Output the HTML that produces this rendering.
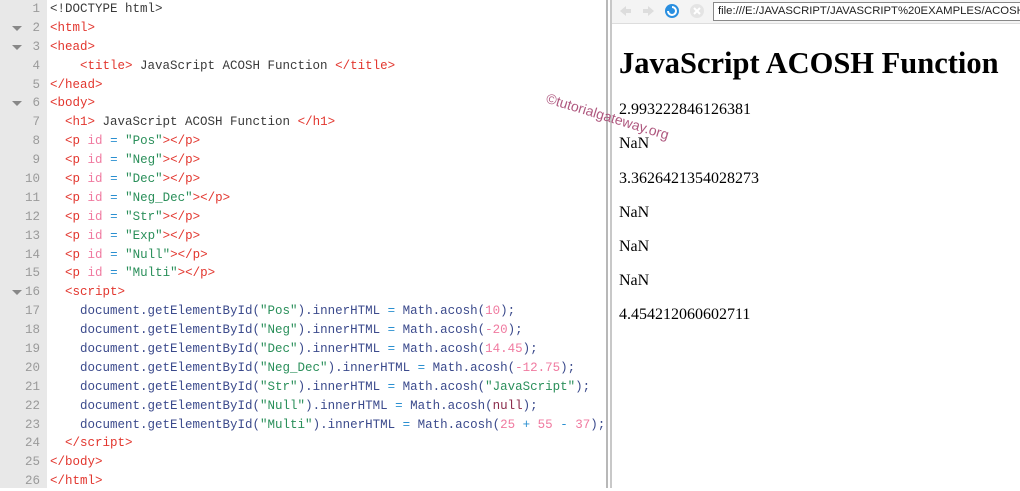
<!DOCTYPE html>
<html><head><style>
body{margin:0;width:1020px;height:488px;overflow:hidden;background:#fff;position:relative;font-family:"Liberation Sans",sans-serif}
#gut{position:absolute;left:0;top:0;width:47px;height:488px;background:#e8e8e8}
#code{position:absolute;left:0;top:0;width:606px;font-family:"Liberation Mono",monospace;font-size:12.5px;line-height:18.9px;color:#3b4a8c}
.l{position:relative;height:18.9px}
.n{position:absolute;left:0;width:40px;text-align:right;color:#9a9a9a}
.n.f::before{content:"";position:absolute;left:12px;top:7px;border-left:5px solid transparent;border-right:5px solid transparent;border-top:5px solid #888}
.c{position:absolute;left:50px;white-space:pre}
.t{color:#e2362e}.a{color:#f07aa0}.s{color:#2a8f5a}.m{color:#f07aa0}.o{color:#2a8fd0}.k{color:#3a3a3a}
#div{position:absolute;left:606px;top:0;width:6px;height:488px;background:#fff;border-left:2px solid #b8b8b8;border-right:2px solid #c8c8c8;box-sizing:border-box}
#bar{position:absolute;left:612px;top:0;width:408px;height:23px;background:#f4f4f4;border-bottom:1px solid #ddd}
#url{position:absolute;left:713px;top:2px;width:310px;height:19px;border:1px solid #888;background:#fff;font-size:11.3px;line-height:17px;padding-left:4px;box-sizing:border-box;color:#222;white-space:nowrap;overflow:hidden}
#pg{position:absolute;left:619px;top:2px;font-family:"Liberation Serif",serif;color:#000}
h1{position:absolute;top:43px;left:0;margin:0;font-size:30.5px;white-space:nowrap;line-height:36px}
.p{position:absolute;left:0;font-size:16px;white-space:nowrap;line-height:18px}
#wm{position:absolute;left:549px;top:90px;transform:rotate(17deg);transform-origin:0 0;color:#a13a68;font-size:14px;white-space:nowrap;opacity:.85}
</style></head><body>
<div id="gut"></div>
<div id="code"><div class="l"><span class="n">1</span><span class="c k">&lt;!DOCTYPE html&gt;</span></div><div class="l"><span class="n f">2</span><span class="c t">&lt;html&gt;</span></div><div class="l"><span class="n f">3</span><span class="c t">&lt;head&gt;</span></div><div class="l"><span class="n">4</span><span class="c">    <span class="t">&lt;title&gt;</span><span class="k"> JavaScript ACOSH Function </span><span class="t">&lt;/title&gt;</span></span></div><div class="l"><span class="n">5</span><span class="c t">&lt;/head&gt;</span></div><div class="l"><span class="n f">6</span><span class="c t">&lt;body&gt;</span></div><div class="l"><span class="n">7</span><span class="c">  <span class="t">&lt;h1&gt;</span><span class="k"> JavaScript ACOSH Function </span><span class="t">&lt;/h1&gt;</span></span></div><div class="l"><span class="n">8</span><span class="c">  <span class="t">&lt;p</span> <span class="a">id</span> <span class="o">=</span> <span class="s">"Pos"</span><span class="t">&gt;&lt;/p&gt;</span></span></div><div class="l"><span class="n">9</span><span class="c">  <span class="t">&lt;p</span> <span class="a">id</span> <span class="o">=</span> <span class="s">"Neg"</span><span class="t">&gt;&lt;/p&gt;</span></span></div><div class="l"><span class="n">10</span><span class="c">  <span class="t">&lt;p</span> <span class="a">id</span> <span class="o">=</span> <span class="s">"Dec"</span><span class="t">&gt;&lt;/p&gt;</span></span></div><div class="l"><span class="n">11</span><span class="c">  <span class="t">&lt;p</span> <span class="a">id</span> <span class="o">=</span> <span class="s">"Neg_Dec"</span><span class="t">&gt;&lt;/p&gt;</span></span></div><div class="l"><span class="n">12</span><span class="c">  <span class="t">&lt;p</span> <span class="a">id</span> <span class="o">=</span> <span class="s">"Str"</span><span class="t">&gt;&lt;/p&gt;</span></span></div><div class="l"><span class="n">13</span><span class="c">  <span class="t">&lt;p</span> <span class="a">id</span> <span class="o">=</span> <span class="s">"Exp"</span><span class="t">&gt;&lt;/p&gt;</span></span></div><div class="l"><span class="n">14</span><span class="c">  <span class="t">&lt;p</span> <span class="a">id</span> <span class="o">=</span> <span class="s">"Null"</span><span class="t">&gt;&lt;/p&gt;</span></span></div><div class="l"><span class="n">15</span><span class="c">  <span class="t">&lt;p</span> <span class="a">id</span> <span class="o">=</span> <span class="s">"Multi"</span><span class="t">&gt;&lt;/p&gt;</span></span></div><div class="l"><span class="n f">16</span><span class="c">  <span class="t">&lt;script&gt;</span></span></div><div class="l"><span class="n">17</span><span class="c">    document.getElementById(<span class="s">"Pos"</span>).innerHTML <span class="o">=</span> Math.acosh(<span class="m">10</span>);</span></div><div class="l"><span class="n">18</span><span class="c">    document.getElementById(<span class="s">"Neg"</span>).innerHTML <span class="o">=</span> Math.acosh(<span class="m">-20</span>);</span></div><div class="l"><span class="n">19</span><span class="c">    document.getElementById(<span class="s">"Dec"</span>).innerHTML <span class="o">=</span> Math.acosh(<span class="m">14.45</span>);</span></div><div class="l"><span class="n">20</span><span class="c">    document.getElementById(<span class="s">"Neg_Dec"</span>).innerHTML <span class="o">=</span> Math.acosh(<span class="m">-12.75</span>);</span></div><div class="l"><span class="n">21</span><span class="c">    document.getElementById(<span class="s">"Str"</span>).innerHTML <span class="o">=</span> Math.acosh(<span class="s">"JavaScript"</span>);</span></div><div class="l"><span class="n">22</span><span class="c">    document.getElementById(<span class="s">"Null"</span>).innerHTML <span class="o">=</span> Math.acosh(<span style="color:#8a2a4a">null</span>);</span></div><div class="l"><span class="n">23</span><span class="c">    document.getElementById(<span class="s">"Multi"</span>).innerHTML <span class="o">=</span> Math.acosh(<span class="m">25</span> <span class="o">+</span> <span class="m">55</span> <span class="o">-</span> <span class="m">37</span>);</span></div><div class="l"><span class="n">24</span><span class="c">  <span class="t">&lt;/script&gt;</span></span></div><div class="l"><span class="n">25</span><span class="c t">&lt;/body&gt;</span></div><div class="l"><span class="n">26</span><span class="c t">&lt;/html&gt;</span></div></div>
<div id="div"></div>
<div id="bar">
<svg width="100" height="23" style="position:absolute;left:0;top:0">
<path d="M8 11 l6-5 v3 h5 v4 h-5 v3z" fill="#ddd"/>
<path d="M42 11 l-6-5 v3 h-5 v4 h5 v3z" fill="#ddd"/>
<circle cx="60" cy="11" r="7" fill="#2a8fe0"/><path d="M56 11 a4 4 0 1 0 4-4" stroke="#fff" stroke-width="2" fill="none"/>
<circle cx="85" cy="11" r="7" fill="#e4e4e4"/><path d="M82 8 l6 6 M88 8 l-6 6" stroke="#fff" stroke-width="2"/>
</svg>
</div>
<div id="url">file:///E:/JAVASCRIPT/JAVASCRIPT%20EXAMPLES/ACOSH.h</div>
<div id="pg">
<h1>JavaScript ACOSH Function</h1>
<div class="p" style="top:99px">2.993222846126381</div>
<div class="p" style="top:133px">NaN</div>
<div class="p" style="top:168px">3.3626421354028273</div>
<div class="p" style="top:202px">NaN</div>
<div class="p" style="top:236px">NaN</div>
<div class="p" style="top:270px">NaN</div>
<div class="p" style="top:304px">4.454212060602711</div>
</div>
<div id="wm">©tutorialgateway.org</div>
</body></html>
